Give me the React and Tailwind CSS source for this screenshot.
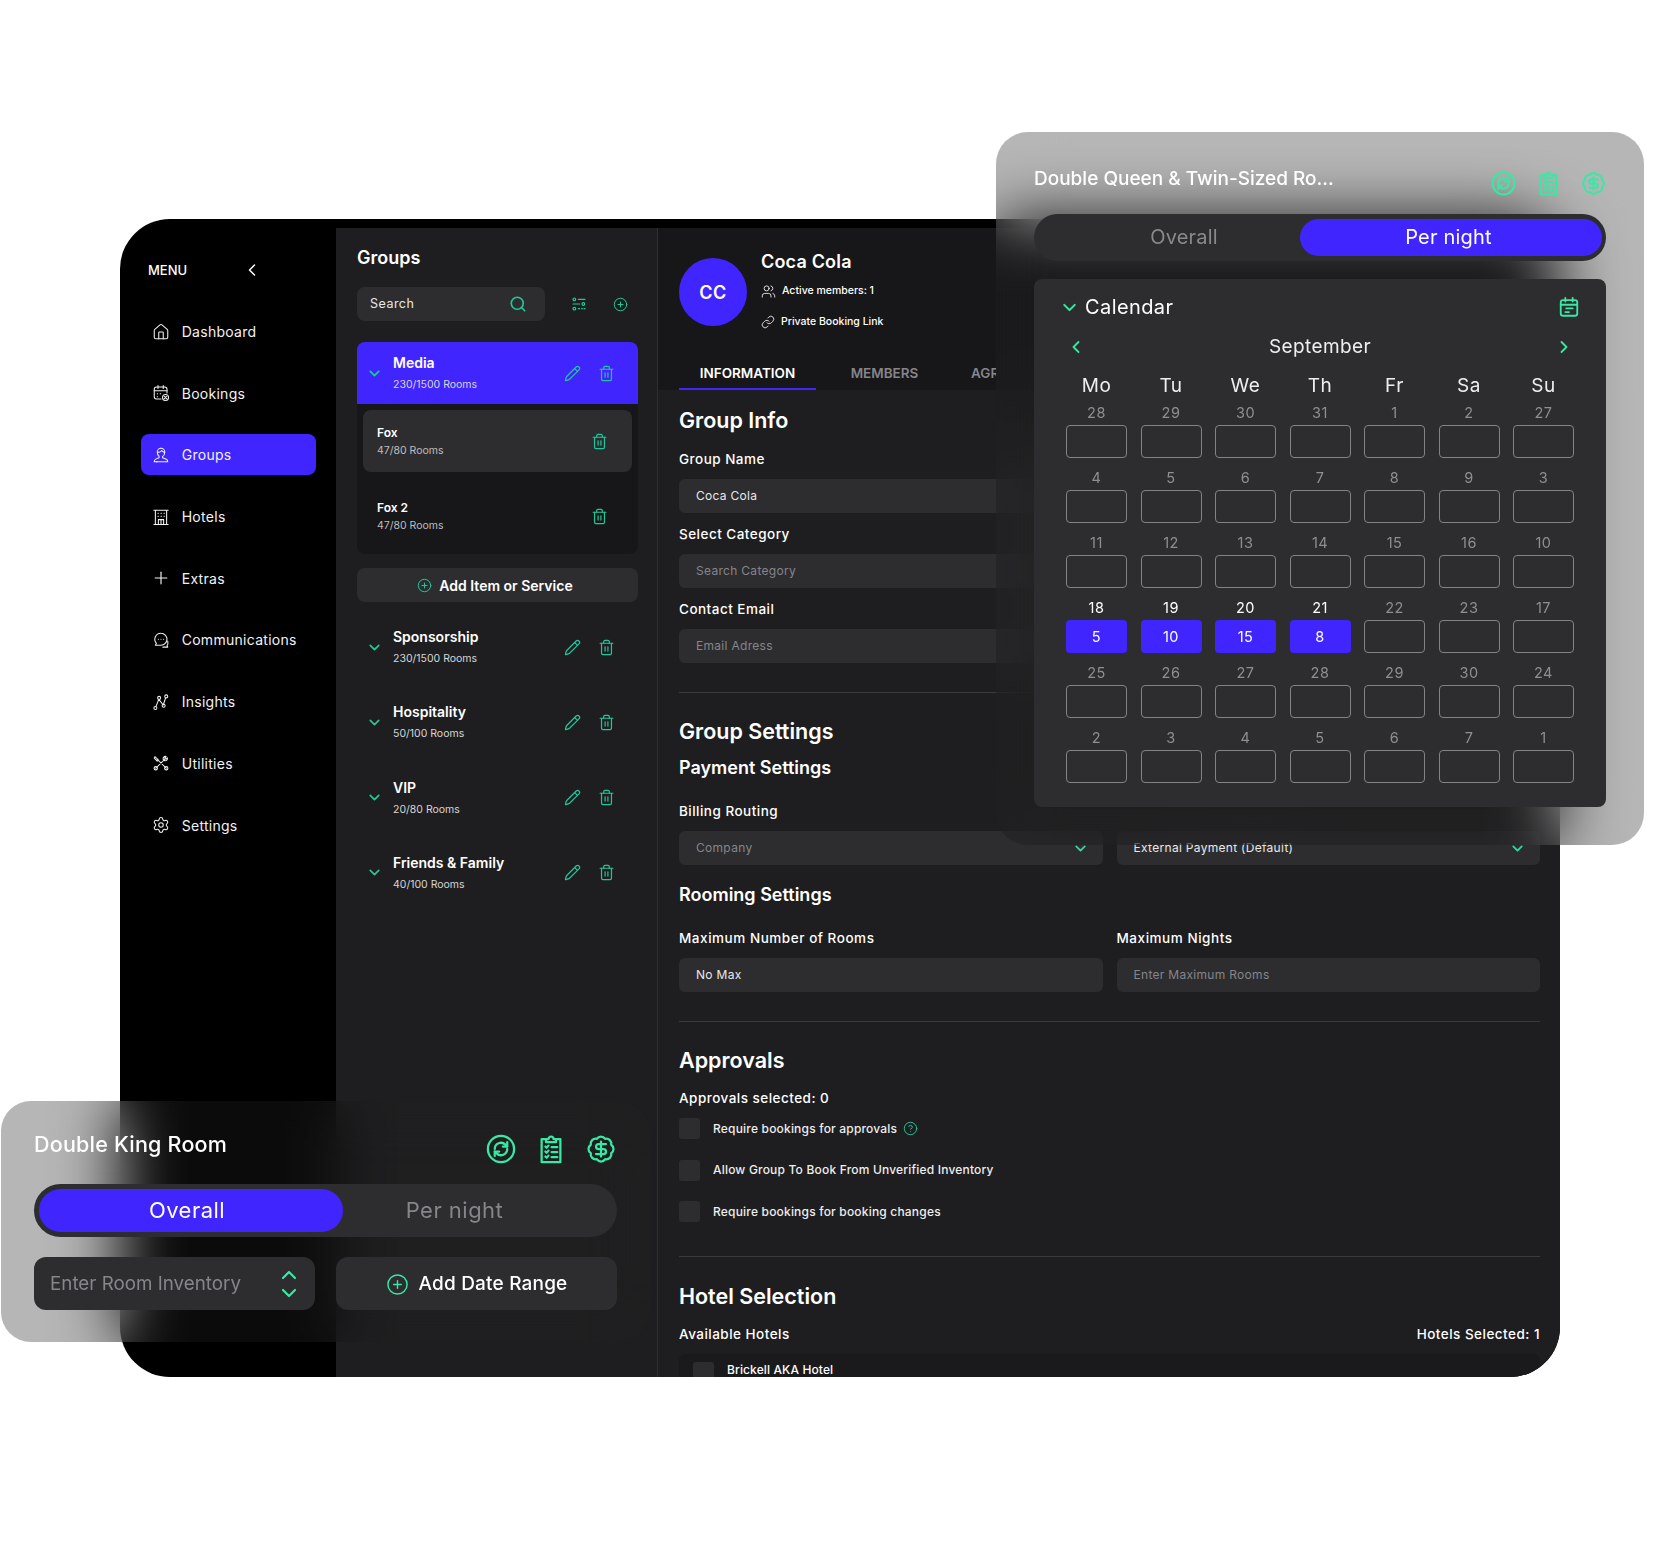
import { BadgeDollarSign, ChevronDown, ChevronLeft, ChevronRight, ChevronUp, CircleHelp, CirclePlus, House, Link, Pencil, Plus, Search, Settings, Trash2, Users } from 'lucide-react'

function IconBase({ size = 18, strokeWidth = 1.6, className = '', children }) {
  return (
    <svg width={size} height={size} viewBox="0 0 24 24" fill="none" stroke="currentColor" strokeWidth={strokeWidth} strokeLinecap="round" strokeLinejoin="round" className={className}>
      {children}
    </svg>
  )
}

const BookingsIcon = (p) => (
  <IconBase {...p}>
    <path d="M12 20H6a3 3 0 0 1-3-3V7a3 3 0 0 1 3-3h11a3 3 0 0 1 3 3v5" />
    <path d="M8 2v4M15 2v4M3 9h17M7 13h.5M11 13h.5M7 17h.5" />
    <circle cx="18" cy="18" r="4" />
    <path d="m16.6 16.6 2.8 2.8m0-2.8-2.8 2.8" />
  </IconBase>
)

const GroupsIcon = (p) => (
  <IconBase {...p}>
    <path d="M12 3a5 5 0 0 1 5 5c0 2.6-1 5-3 6.2v1.6l5 1.8c1.4.5 2 1.500 2 3.400H6" />
    <path d="M12 3a5 5 0 0 0-5 5c0 2.300.8 4.300 2.400 5.600v2.200L5 17.500c-1.300.5-2 1.600-2 3.500h4" />
    <path d="M8 8.500c2 0 4-.8 5-2.500 1 1.500 2 2.200 4 2.500" />
  </IconBase>
)

const HotelIcon = (p) => (
  <IconBase {...p}>
    <path d="M2.500 3h19M2.500 22h19M4.500 3v19M19.500 3v19" />
    <path d="M8 7h.5M12 7h.5M16 7h.5M8 11h.5M12 11h.5M16 11h.5" />
    <path d="M8.500 22v-6.500h7V22M12 15.500V22" />
  </IconBase>
)

const ChatIcon = (p) => (
  <IconBase {...p}>
    <path d="M12 3a8 8 0 0 1 0 16H4.500l1.400-2.600A8 8 0 0 1 12 3Z" />
    <path d="M8.500 11h.1M12 11h.1M15.500 11h.1" />
    <path d="M21 13.500c.6 2.400.2 4.500-1 6.200l1 1.800h-6.500" />
  </IconBase>
)

const InsightsIcon = (p) => (
  <IconBase {...p}>
    <path d="m5.500 17.500 3.500-9 6 7.500 3-9" />
    <circle cx="4.500" cy="20" r="2" />
    <circle cx="9.500" cy="6.500" r="2" />
    <circle cx="15.500" cy="17" r="2" />
    <circle cx="19" cy="4.500" r="2" />
  </IconBase>
)

const UtilitiesIcon = (p) => (
  <IconBase {...p}>
    <path d="m7 7 12 12M17 7 5 19" />
    <path d="M4 3.500 8.500 8 7 9.500 3 5.500ZM20.500 5a3 3 0 0 1-4 3.800L15 7.300A3 3 0 0 1 18.800 3.400L17 5.500l1.500 1.500Z" />
    <circle cx="19" cy="19" r="2.200" />
    <circle cx="5" cy="19" r="2.200" />
  </IconBase>
)

const FilterIcon = (p) => (
  <IconBase {...p}>
    <circle cx="5" cy="5" r="2" />
    <path d="M11 5h10M3 12h10" />
    <circle cx="18.500" cy="12" r="2" />
    <circle cx="5" cy="19" r="2" />
    <path d="M11 19h2M16 19h1M19.500 19h1.500" />
  </IconBase>
)

const RefreshIcon = (p) => (
  <IconBase {...p}>
    <circle cx="12" cy="12" r="10.500" />
    <path d="M7 12a5 5 0 0 1 8.500-3.500L17 10" />
    <path d="M17 6.500V10h-3.500" />
    <path d="M17 12a5 5 0 0 1-8.500 3.500L7 14" />
    <path d="M7 17.500V14h3.500" />
  </IconBase>
)

const ClipboardIcon = (p) => (
  <IconBase {...p}>
    <path d="M8 4H4.500v18.500h15V4H16" />
    <path d="M8 6.500V4h2a2 2 0 0 1 4 0h2v2.500Z" />
    <path d="m7.500 10 1 1 1.500-1.700M7.500 14l1 1 1.500-1.700M7.500 18l1 1 1.500-1.700M12.500 10.500h4.500M12.500 14.500h4.500M12.500 18.500h4.500" />
  </IconBase>
)

const CalendarNoteIcon = (p) => (
  <IconBase {...p}>
    <rect x="3" y="4.500" width="18" height="17" rx="2.500" />
    <path d="M8 2v4M16 2v4M3 9.500h18M9 13.500h7M8 17.500h4" />
  </IconBase>
)

const navItems = [
  { label: 'Dashboard', icon: House },
  { label: 'Bookings', icon: BookingsIcon },
  { label: 'Groups', icon: GroupsIcon, active: true },
  { label: 'Hotels', icon: HotelIcon },
  { label: 'Extras', icon: Plus, bigger: true },
  { label: 'Communications', icon: ChatIcon },
  { label: 'Insights', icon: InsightsIcon },
  { label: 'Utilities', icon: UtilitiesIcon },
  { label: 'Settings', icon: Settings },
]

const groups = [
  { name: 'Sponsorship', rooms: '230/1500 Rooms' },
  { name: 'Hospitality', rooms: '50/100 Rooms' },
  { name: 'VIP', rooms: '20/80 Rooms' },
  { name: 'Friends & Family', rooms: '40/100 Rooms' },
]

const weekdays = ['Mo', 'Tu', 'We', 'Th', 'Fr', 'Sa', 'Su']

const calendarRows = [
  ['28', '29', '30', '31', '1', '2', '27'],
  ['4', '5', '6', '7', '8', '9', '3'],
  ['11', '12', '13', '14', '15', '16', '10'],
  ['18', '19', '20', '21', '22', '23', '17'],
  ['25', '26', '27', '28', '29', '30', '24'],
  ['2', '3', '4', '5', '6', '7', '1'],
]

const filled = { '3-0': '5', '3-1': '10', '3-2': '15', '3-3': '8' }

function GroupRow({ name, rooms, active }) {
  return (
    <div className={`flex h-[62px] items-center pl-[9px] pr-[23px] ${active ? 'rounded-t-lg bg-[#4125ff]' : ''}`}>
      <ChevronDown size={17} strokeWidth={2.4} className="shrink-0 text-[#22c69b]" />
      <div className="ml-[10px] flex-1">
        <div className="text-[14px] leading-[20px] font-semibold tracking-normal text-white">{name}</div>
        <div className="mt-[4px] text-[10.500px] leading-[16px] tracking-normal text-[#d6d6d6]">{rooms}</div>
      </div>
      <Pencil size={17} strokeWidth={1.7} className="text-[#22c69b]" />
      <Trash2 size={17} strokeWidth={1.7} className="ml-[17px] text-[#22c69b]" />
    </div>
  )
}

function SubRow({ name, active }) {
  return (
    <div className={`mx-[6px] flex h-[62px] items-center rounded-lg pl-[14px] pr-[24px] ${active ? 'bg-[#2d2d30]' : ''}`}>
      <div className="flex-1">
        <div className="mt-[1px] text-[12px] leading-[18px] font-semibold tracking-normal text-white">{name}</div>
        <div className="text-[10.500px] leading-[18px] tracking-normal text-[#bdbdbd]">47/80 Rooms</div>
      </div>
      <Trash2 size={17} strokeWidth={1.7} className="text-[#22c69b]" />
    </div>
  )
}

function Field({ children, muted, chevron }) {
  return (
    <div className="flex h-[34px] items-center justify-between rounded-md bg-[#2d2d30] pl-[17px] pr-[14px]">
      <span className={`text-[12px] tracking-[0.025em] ${muted ? 'text-[#85858a]' : 'text-[#e8e8e8]'}`}>{children}</span>
      {chevron && <ChevronDown size={17} strokeWidth={2.4} className="text-[#2edba5]" />}
    </div>
  )
}

function Check({ label, help }) {
  return (
    <div className="flex h-[21px] items-center">
      <div className="h-[21px] w-[21px] rounded-[3px] bg-[#2d2d30]" />
      <span className="ml-[13px] text-[12px] font-medium tracking-[0.016em] text-[#eeeeee]">{label}</span>
      {help && <CircleHelp size={15} strokeWidth={1.5} className="ml-[6px] text-[#22c69b]" />}
    </div>
  )
}

function CalendarCard() {
  return (
    <div className="absolute left-[996px] top-[132px] h-[713px] w-[648px] rounded-[32px] bg-[#202022]/33 px-[38px] pt-[31px] backdrop-blur-[32px]">
      <div className="flex h-[40px] items-start justify-between">
        <div className="pt-[1px] text-[19px] leading-[30px] font-medium tracking-normal text-white">Double Queen &amp; Twin-Sized Ro...</div>
        <div className="flex gap-[20px] pt-[8px] text-[#38e8a5]">
          <RefreshIcon size={25} strokeWidth={2} />
          <ClipboardIcon size={25} strokeWidth={2} />
          <BadgeDollarSign size={25} strokeWidth={2} />
        </div>
      </div>
      <div className="mt-[11px] flex h-[47px] items-center rounded-full bg-[#2d2d30] p-[4px]">
        <div className="flex-1 pl-[30px] text-center text-[20px] leading-[37px] tracking-[0.01em] text-[#8a8a8d]">Overall</div>
        <div className="w-[302px] rounded-full bg-[#4125ff] pr-[5px] text-center text-[20px] leading-[37px] tracking-[0.01em] text-white">Per night</div>
      </div>
      <div className="mt-[18px] h-[528px] rounded-lg bg-[#2d2d30] px-[32px] pt-[14px]">
        <div className="flex h-[28px] items-center">
          <ChevronDown size={21} strokeWidth={2.4} className="ml-[-7px] text-[#38e8a5]" />
          <span className="ml-[5px] text-[20px] leading-[28px] tracking-[0.02em] text-white">Calendar</span>
          <CalendarNoteIcon size={22} strokeWidth={2} className="ml-auto mr-[-6px] text-[#38e8a5]" />
        </div>
        <div className="mt-[13px] flex h-[26px] items-center justify-between">
          <ChevronLeft size={20} strokeWidth={2.2} className="text-[#38e8a5]" />
          <span className="text-[19px] tracking-[0.02em] text-[#eeeeee]">September</span>
          <ChevronRight size={20} strokeWidth={2.2} className="text-[#38e8a5]" />
        </div>
        <div className="mt-[14px] grid grid-cols-7 gap-x-[13.500px] text-center text-[19px] leading-[24px] text-[#eeeeee]">
          {weekdays.map((d) => <div key={d}>{d}</div>)}
        </div>
        <div className="mt-[4px] flex flex-col gap-y-[9px]">
          {calendarRows.map((row, r) => (
            <div key={r} className="grid grid-cols-7 gap-x-[13.500px]">
              {row.map((day, c) => {
                const val = filled[`${r}-${c}`]
                return (
                  <div key={c} className="flex flex-col gap-y-[3px]">
                    <div className={`h-[20px] text-center text-[14.500px] leading-[21px] ${val ? 'text-white' : 'text-[#8f8f92]'}`}>{day}</div>
                    {val
                      ? <div className="h-[33px] rounded-[4px] bg-[#4125ff] text-center text-[14.500px] leading-[33px] text-white">{val}</div>
                      : <div className="h-[33px] rounded-[4px] border border-[#838386]" />}
                  </div>
                )
              })}
            </div>
          ))}
        </div>
      </div>
    </div>
  )
}

function RoomCard() {
  return (
    <div className="absolute left-[1px] top-[1101px] h-[241px] w-[649px] rounded-[30px] bg-[#202022]/33 px-[33px] pt-[27px] backdrop-blur-[32px]">
      <div className="flex h-[46px] items-start justify-between">
        <div className="text-[21.500px] leading-[32px] font-medium tracking-[0.01em] text-white">Double King Room</div>
        <div className="flex gap-[20px] pr-[1px] pt-[6px] text-[#38e8a5]">
          <RefreshIcon size={30} strokeWidth={1.8} />
          <ClipboardIcon size={30} strokeWidth={1.8} />
          <BadgeDollarSign size={30} strokeWidth={1.8} />
        </div>
      </div>
      <div className="mt-[10px] flex h-[53px] items-center rounded-full bg-[#2d2d30] p-[5px]">
        <div className="w-[304px] rounded-full bg-[#4125ff] pr-[8px] text-center text-[22px] leading-[43px] text-white">Overall</div>
        <div className="flex-1 pr-[46px] text-center text-[22px] text-[#85858a]">Per night</div>
      </div>
      <div className="mt-[20px] grid grid-cols-2 gap-[21px]">
        <div className="flex h-[53px] items-center justify-between rounded-xl bg-[#2d2d30] pl-[16px] pr-[14px]">
          <span className="pt-[1px] text-[18.800px] tracking-normal text-[#85858a]">Enter Room Inventory</span>
          <div className="flex flex-col items-center text-[#38e8a5]">
            <ChevronUp size={24} strokeWidth={2.2} className="mb-[-6px]" />
            <ChevronDown size={24} strokeWidth={2.2} />
          </div>
        </div>
        <div className="flex h-[53px] items-center justify-center gap-[10px] rounded-xl bg-[#2d2d30] pt-[1px]">
          <CirclePlus size={23} strokeWidth={1.5} className="text-[#38e8a5]" />
          <span className="text-[19px] font-medium tracking-[0.01em] text-white">Add Date Range</span>
        </div>
      </div>
    </div>
  )
}

export default function App() {
  return (
    <div className="relative h-[1560px] w-[1680px] overflow-hidden bg-white pl-[120px] pt-[219px] font-['Inter',sans-serif] tracking-[0.03em]">
      <div className="flex h-[1158px] w-[1440px] overflow-hidden rounded-[50px] bg-black pt-[9px]">
        {/* left menu */}
        <aside className="w-[216px] shrink-0">
          <div className="flex h-[83px] items-start pl-[28px] pr-[74px] pt-[32px] text-white">
            <span className="flex-1 text-[13px] leading-[20px] font-medium tracking-normal">MENU</span>
            <ChevronLeft size={20} strokeWidth={1.8} />
          </div>
          <nav className="flex flex-col gap-[20.700px] pl-[20.700px] pr-[20.300px]">
            {navItems.map(({ label, icon: Icon, active, bigger }) => (
              <div key={label} className={`flex h-[41px] items-center gap-[12px] rounded-lg pl-[11px] text-[14px] tracking-[0.02em] text-[#f2f2f2] ${active ? 'bg-[#4125ff]' : ''}`}>
                <Icon size={bigger ? 20 : 18} strokeWidth={1.4} className={bigger ? 'mx-[-1px]' : ''} />
                <span>{label}</span>
              </div>
            ))}
          </nav>
        </aside>

        {/* groups list */}
        <section className="w-[322px] shrink-0 border-r border-[#2f2f32] bg-[#1e1e20] pl-[21px] pr-[19px] pt-[16px]">
          <div className="text-[18px] leading-[28px] font-semibold tracking-normal text-white">Groups</div>
          <div className="mt-[15px] flex items-center">
            <div className="flex h-[34px] w-[188px] items-center justify-between rounded-lg bg-[#2d2d30] pl-[13px] pr-[18px]">
              <span className="text-[12.500px] text-[#e8e8e8]">Search</span>
              <Search size={18} strokeWidth={2.2} className="text-[#22c69b]" />
            </div>
            <FilterIcon size={16} strokeWidth={1.8} className="ml-[26px] text-[#22c69b]" />
            <CirclePlus size={15} strokeWidth={1.6} className="ml-[26px] text-[#22c69b]" />
          </div>
          <div className="mt-[21px] h-[212px] rounded-lg bg-[#17171a]">
            <GroupRow name="Media" rooms="230/1500 Rooms" active />
            <div className="flex flex-col gap-[13px] pt-[6px]">
              <SubRow name="Fox" active />
              <SubRow name="Fox 2" />
            </div>
          </div>
          <div className="mt-[14px] flex h-[34px] items-center justify-center gap-[7px] rounded-lg bg-[#2d2d30] pr-[5px]">
            <CirclePlus size={15} strokeWidth={1.6} className="text-[#22c69b]" />
            <span className="text-[14px] font-semibold tracking-normal text-white">Add Item or Service</span>
          </div>
          <div className="mt-[14px] flex flex-col gap-[13.300px]">
            {groups.map((g) => <GroupRow key={g.name} {...g} />)}
          </div>
        </section>

        {/* group details */}
        <main className="flex-1 bg-[#1e1e20]">
          <header className="flex h-[162px] flex-col justify-between bg-[#17171a] pl-[21px] pt-[30px]">
            <div className="flex">
              <div className="flex h-[68px] w-[68px] items-center justify-center rounded-full bg-[#4125ff] text-[18px] font-semibold text-white">CC</div>
              <div className="ml-[14px] mt-[-9px] text-white">
                <div className="text-[18px] leading-[26px] font-semibold tracking-[0.01em]">Coca Cola</div>
                <div className="mt-[8px] flex h-[16px] items-center gap-[6px] text-[10.500px] font-medium tracking-normal">
                  <Users size={15} strokeWidth={1.3} />
                  <span>Active members: 1</span>
                </div>
                <div className="mt-[15px] flex h-[16px] items-center gap-[6px] text-[10.500px] font-medium tracking-normal">
                  <Link size={14} strokeWidth={1.4} />
                  <span>Private Booking Link</span>
                </div>
              </div>
            </div>
            <div className="flex text-[13.500px] leading-[33px] font-semibold tracking-normal">
              <div className="h-[33px] w-[137px] border-b-2 border-[#4125ff] text-center text-white">INFORMATION</div>
              <div className="h-[33px] w-[137px] text-center text-[#85858a]">MEMBERS</div>
              <div className="h-[33px] w-[43px] overflow-hidden whitespace-nowrap pl-[18px] text-[#85858a]">AGREEMENTS</div>
            </div>
          </header>

          <div className="pl-[21px] pr-[20px] text-white">
            <h2 className="mt-[14px] text-[21.500px] leading-[32px] font-semibold tracking-normal">Group Info</h2>
            <div className="mt-[13px] text-[13.500px] leading-[20px] font-medium">Group Name</div>
            <div className="mt-[10px] w-[423px]"><Field>Coca Cola</Field></div>
            <div className="mt-[11px] text-[13.500px] leading-[20px] font-medium">Select Category</div>
            <div className="mt-[10px] w-[423px]"><Field muted>Search Category</Field></div>
            <div className="mt-[11px] text-[13.500px] leading-[20px] font-medium">Contact Email</div>
            <div className="mt-[10px] w-[423px]"><Field muted>Email Adress</Field></div>
            <div className="mt-[29px] h-px bg-[#3a3a3d]" />

            <h2 className="mt-[22px] text-[21.500px] leading-[32px] font-semibold tracking-normal">Group Settings</h2>
            <h3 className="mt-[8px] text-[18px] leading-[26px] font-semibold tracking-normal">Payment Settings</h3>
            <div className="mt-[20px] grid grid-cols-2 gap-x-[14px] gap-y-[10px]">
              <div className="text-[13.500px] leading-[20px] font-medium">Billing Routing</div>
              <div className="h-[20px]" />
              <Field muted chevron>Company</Field>
              <Field chevron>External Payment (Default)</Field>
            </div>
            <h3 className="mt-[17px] text-[18px] leading-[26px] font-semibold tracking-normal">Rooming Settings</h3>
            <div className="mt-[20px] grid grid-cols-2 gap-x-[14px] gap-y-[10px]">
              <div className="text-[13.500px] leading-[20px] font-medium tracking-[0.04em]">Maximum Number of Rooms</div>
              <div className="text-[13.500px] leading-[20px] font-medium tracking-[0.04em]">Maximum Nights</div>
              <Field>No Max</Field>
              <Field muted>Enter Maximum Rooms</Field>
            </div>
            <div className="mt-[29px] h-px bg-[#3a3a3d]" />

            <h2 className="mt-[22px] text-[21.500px] leading-[32px] font-semibold tracking-normal">Approvals</h2>
            <div className="mt-[12px] text-[13.500px] leading-[20px] font-medium">Approvals selected: 0</div>
            <div className="mt-[10px] flex flex-col gap-[20.500px]">
              <Check label="Require bookings for approvals" help />
              <Check label="Allow Group To Book From Unverified Inventory" />
              <Check label="Require bookings for booking changes" />
            </div>
            <div className="mt-[34px] h-px bg-[#3a3a3d]" />

            <h2 className="mt-[23px] text-[21.500px] leading-[32px] font-semibold tracking-normal">Hotel Selection</h2>
            <div className="mt-[12px] flex justify-between text-[13.500px] leading-[20px] font-medium">
              <span>Available Hotels</span>
              <span>Hotels Selected: 1</span>
            </div>
            <div className="mt-[10px] flex h-[60px] items-start rounded-md bg-[#1a1a1c] pl-[14px] pt-[8px]">
              <div className="h-[21px] w-[21px] rounded-[3px] bg-[#2d2d30]" />
              <span className="ml-[13px] text-[12px] leading-[16px] font-medium tracking-[0.01em]">Brickell AKA Hotel</span>
            </div>
          </div>
        </main>
      </div>

      <CalendarCard />
      <RoomCard />
    </div>
  )
}
